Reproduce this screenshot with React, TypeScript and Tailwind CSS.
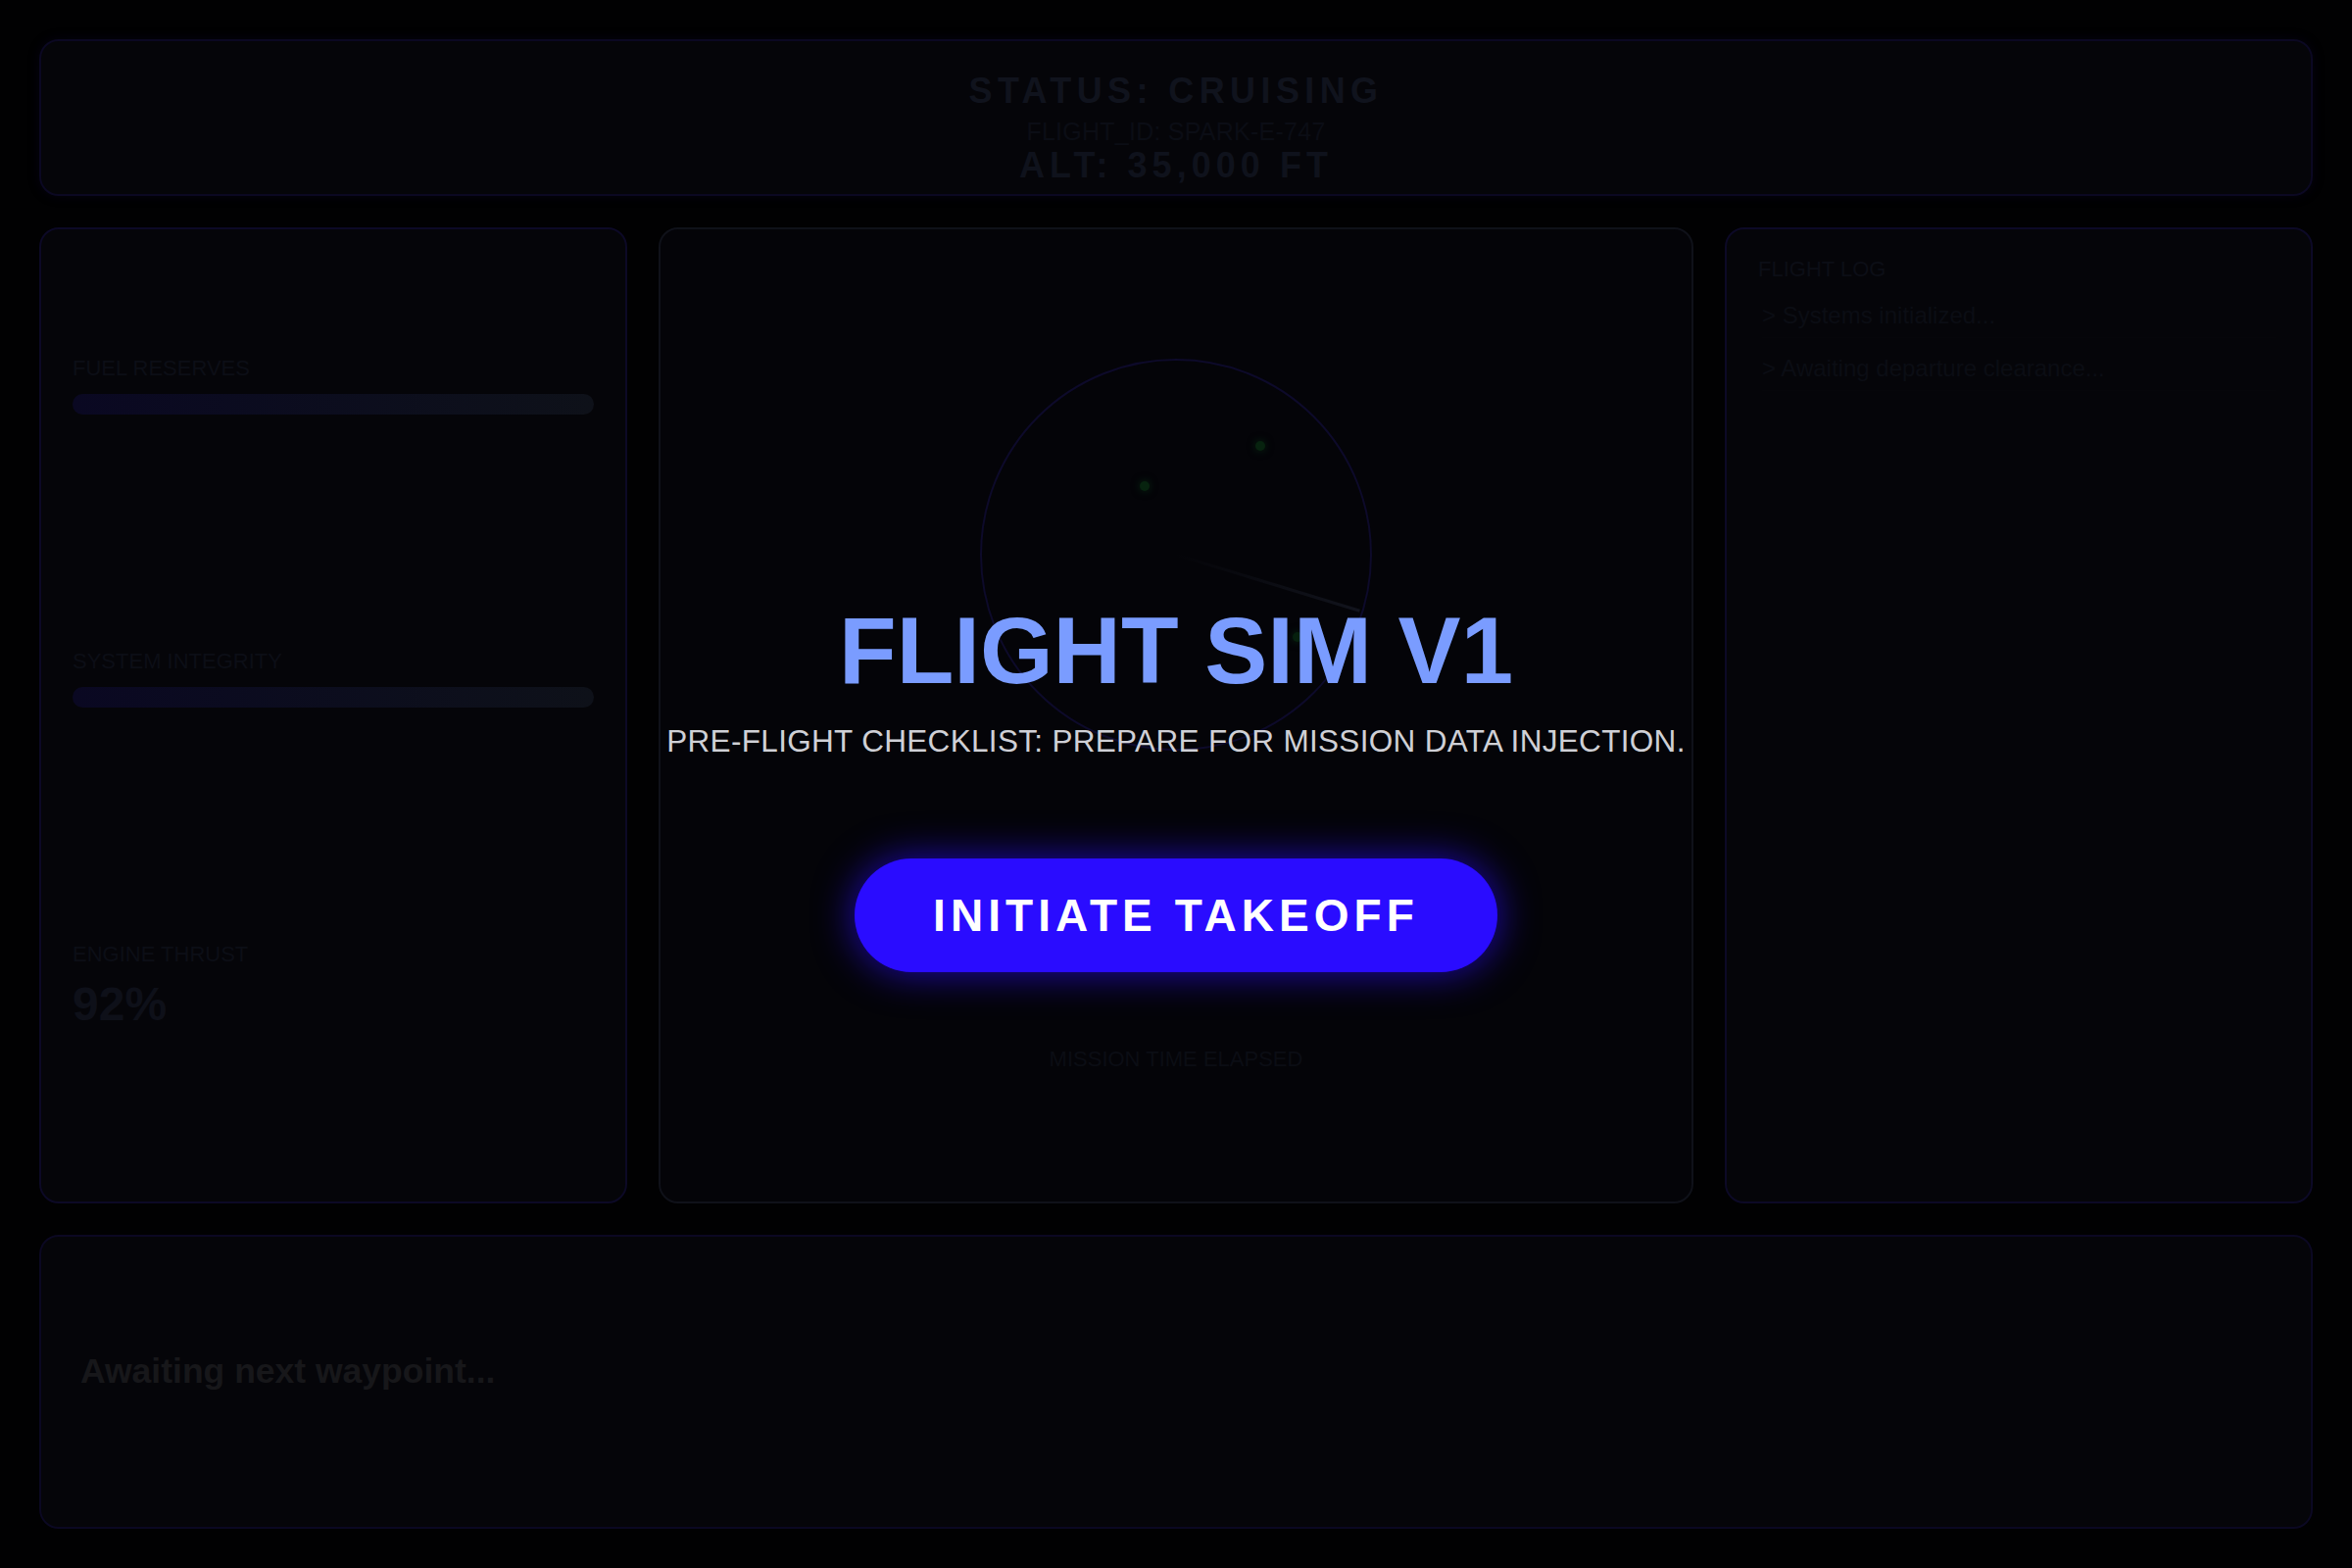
export default function App() {
  return (
    <div className="relative h-[1600px] w-[2400px] overflow-hidden bg-[#010102] p-10 font-['Liberation_Sans',Arial,sans-serif]">
      <div className="flex h-full flex-col gap-8">
        {/* Header */}
        <header className="flex h-[160px] shrink-0 flex-col items-center rounded-[20px] border-2 border-[#0b0822] bg-[#050509] pt-[33px] shadow-[0_0_12px_rgba(20,10,60,0.25)]">
          <div className="text-[36px] font-bold leading-[36px] tracking-[0.15em] text-[#10131d]">STATUS: CRUISING</div>
          <div className="mt-[8px] text-[25px] leading-[30px] tracking-[0.01em] text-[#0b0d15]">FLIGHT_ID: SPARK-E-747</div>
          <div className="mt-[2px] text-[36px] font-bold leading-[36px] tracking-[0.14em] text-[#0f121c]">ALT: 35,000 FT</div>
        </header>

        {/* Middle */}
        <div className="grid h-[996px] shrink-0 grid-cols-[600px_1fr_600px] gap-8">
          {/* Left */}
          <section className="flex flex-col gap-[235px] rounded-[20px] border-2 border-[#0c0926] bg-[#050509] px-8 pt-[125px]">
            <div>
              <div className="text-[22px] leading-[33px] text-[#0c0e16]">FUEL RESERVES</div>
              <div className="mt-[10px] h-[21px] rounded-full bg-linear-to-r from-[#0a0822] to-[#0e1119]" />
            </div>
            <div>
              <div className="text-[22px] leading-[33px] text-[#0c0e16]">SYSTEM INTEGRITY</div>
              <div className="mt-[10px] h-[21px] rounded-full bg-linear-to-r from-[#0a0822] to-[#0e1119]" />
            </div>
            <div>
              <div className="text-[22px] leading-[33px] text-[#0c0e16]">ENGINE THRUST</div>
              <div className="mt-[11px] text-[48px] font-bold leading-none text-[#0e1019]">92%</div>
            </div>
          </section>

          {/* Center */}
          <section className="flex flex-col items-center rounded-[20px] border-2 border-[#0f1119] bg-[#040408] pt-[132px]">
            <div className="relative h-[400px] w-[400px] shrink-0 rounded-full border-2 border-[#0d0a2a]">
              <div className="absolute left-[161px] top-[123px] h-[10px] w-[10px] rounded-full bg-[#07230f] shadow-[0_0_8px_rgba(10,60,25,0.6)]" />
              <div className="absolute left-[279px] top-[82px] h-[10px] w-[10px] rounded-full bg-[#07230f] shadow-[0_0_8px_rgba(10,60,25,0.6)]" />
              <div className="absolute left-[317px] top-[277px] h-[10px] w-[10px] rounded-full bg-[#06200e] shadow-[0_0_8px_rgba(10,60,25,0.6)]" />
              <div className="absolute left-1/2 top-1/2 h-[3px] w-[196px] origin-left -translate-y-1/2 rotate-[17deg] bg-linear-to-r from-transparent to-[#12141d]" />
            </div>
            <div className="mt-[298px] text-[22px] leading-[33px] text-[#0b0d14]">MISSION TIME ELAPSED</div>
          </section>

          {/* Right */}
          <section className="flex flex-col rounded-[20px] border-2 border-[#0c0926] bg-[#050509] px-8 pt-6">
            <div className="text-[22px] leading-[33px] text-[#0c0e16]">FLIGHT LOG</div>
            <div className="mx-1 border-b border-[#06060a] pb-[4px] pt-[13px] text-[24px] leading-[36px] text-[#0b0d14]">&gt; Systems initialized...</div>
            <div className="mx-1 border-b border-[#06060a] pb-[4px] pt-[13px] text-[24px] leading-[36px] text-[#0b0d14]">&gt; Awaiting departure clearance...</div>
          </section>
        </div>

        {/* Bottom */}
        <footer className="flex h-[300px] shrink-0 items-center rounded-[20px] border-2 border-[#0b0822] bg-[#050509] px-10 pb-[22px]">
          <div className="text-[35.5px] font-bold leading-[36px] text-[#17171a]">Awaiting next waypoint...</div>
        </footer>
      </div>

      {/* Overlay */}
      <div className="absolute inset-0 flex flex-col items-center justify-center pt-[8px]">
        <h1 className="text-[96px] font-bold leading-none text-[#7a9cff]">FLIGHT SIM V1</h1>
        <p className="mt-[26px] text-[31.5px] leading-[36px] tracking-[0.01em] text-[#cfd0d6]">PRE-FLIGHT CHECKLIST: PREPARE FOR MISSION DATA INJECTION.</p>
        <button className="mt-[102px] flex h-[116px] items-center rounded-full bg-[#2a0cff] px-[80px] text-[46px] font-bold tracking-[0.11em] text-white shadow-[0_0_40px_rgba(43,12,255,0.7)]">
          INITIATE TAKEOFF
        </button>
      </div>
    </div>
  );
}
